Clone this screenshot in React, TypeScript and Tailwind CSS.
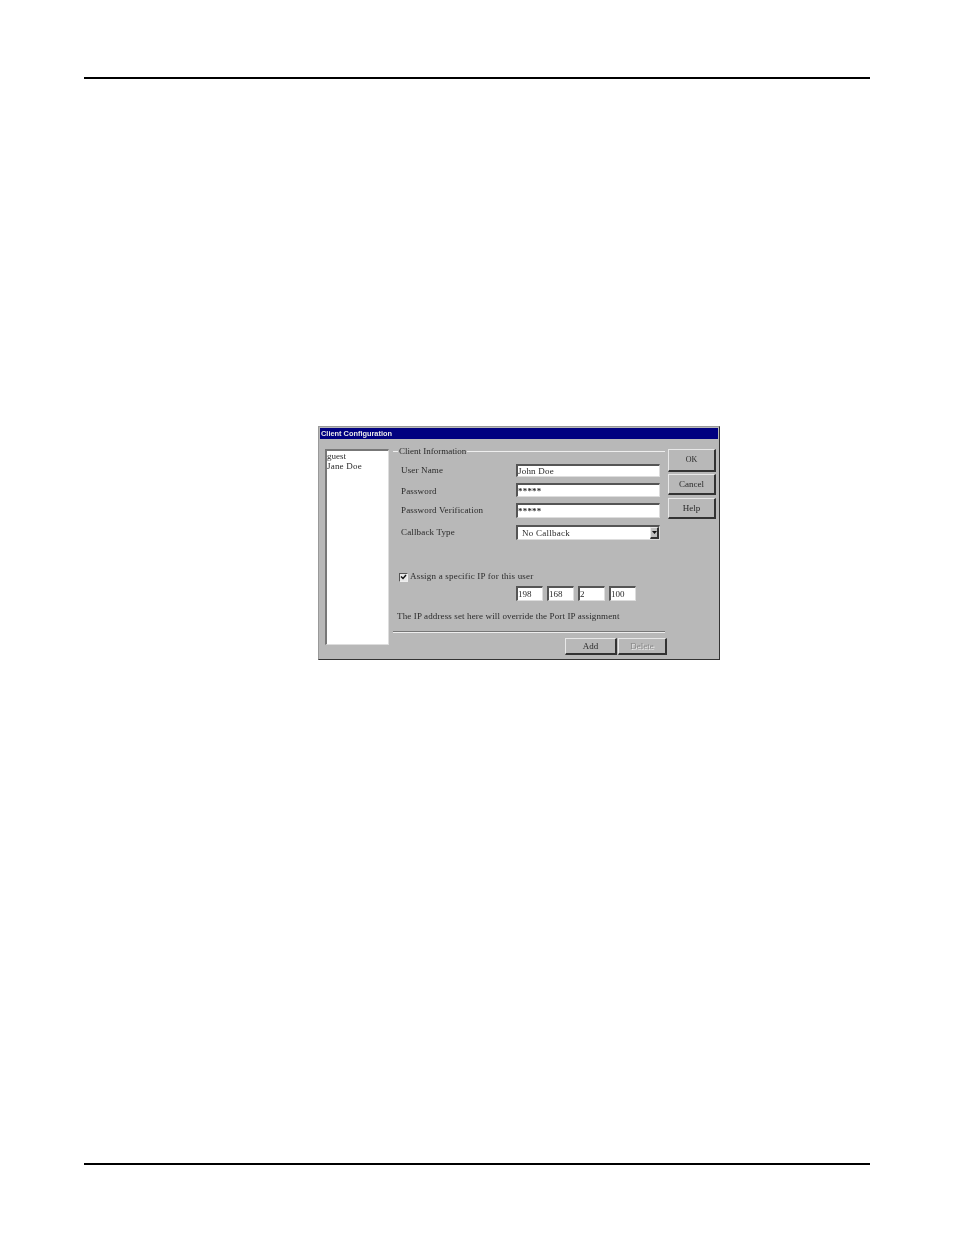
const font = "font-['Liberation_Serif',serif] text-[9px] leading-[12px] text-[#2a2a2a]"

const sunken = 'border-t-2 border-l-2 border-r border-b border-t-[#555] border-l-[#555] border-r-[#ddd] border-b-[#ddd] bg-white'
const raised = 'flex items-center justify-center border-t border-l border-r-2 border-b-2 border-t-[#e8e8e8] border-l-[#e8e8e8] border-r-[#333] border-b-[#333]'

const Field = ({ label, value, className, labelClass, valueClass }: { label: string; value: string; className: string; labelClass?: string; valueClass?: string }) => (
  <div className={`flex items-center ${className}`}>
    <span className={`ml-[8px] w-[115px] tracking-[0.15px] ${labelClass ?? ''}`}>{label}</span>
    <div className={`flex h-full w-[144px] items-center tracking-[0.2px] ${sunken} ${valueClass ?? ''}`}>{value}</div>
  </div>
)

const IpBox = ({ value }: { value: string }) => (
  <div className={`flex h-[15px] w-[27px] items-center ${sunken}`}>{value}</div>
)

const Dialog = () => (
  <div className={`flex h-[234px] w-[402px] flex-col border border-[#999] border-r-[#333] border-b-[#333] bg-[#b8b8b8] p-[1px] blur-[0.3px] ${font}`}>
    <div className="flex h-[11px] items-center bg-[#000080] pl-[1px] font-['Liberation_Sans',sans-serif] text-[7.4px] font-bold text-[#e8e8e8]">
      Client Configuration
    </div>
    <div className="flex flex-1 pt-[10px]">
      <div className="ml-[5px] flex h-[196px] w-[64px] flex-col border-t-2 border-l-2 border-b border-r border-t-[#777] border-l-[#777] border-r-[#ddd] border-b-[#ddd] bg-white">
        <span className="h-[10px] leading-[10px]">guest</span>
        <span className="h-[11px] leading-[11px] tracking-[0.2px]">Jane Doe</span>
      </div>

      <div className="ml-[4px] flex w-[272px] flex-col">
        <div className="flex h-[4px] items-center">
          <span className="h-px w-[5px] bg-[#eee]"></span>
          <span className="px-[1px]">Client Information</span>
          <span className="h-px flex-1 bg-[#eee]"></span>
        </div>
        <Field label="User Name" value="John Doe" className="mt-[11px] h-[13px]" labelClass="mb-[2px]" valueClass="pb-[1px]" />
        <Field label="Password" value="*****" className="mt-[6px] h-[14px]" labelClass="mt-[2px]" valueClass="font-bold" />
        <Field label="Password Verification" value="*****" className="mt-[6px] h-[15px]" labelClass="mb-[2px]" valueClass="font-bold" />
        <div className="mt-[7px] flex h-[15px] items-center">
          <span className="mb-[2px] ml-[8px] w-[115px] tracking-[0.15px]">Callback Type</span>
          <div className={`flex h-full w-[144px] items-center justify-between pl-[4px] tracking-[0.25px] ${sunken}`}>
            <span className="mb-[1px]">No Callback</span>
            <div className={`h-[12px] w-[9px] !border-l !border-t ${raised} bg-[#c0c0c0]`}>
              <svg width="5" height="3" viewBox="0 0 5 3"><path d="M0 0h5L2.5 3z" fill="#111" /></svg>
            </div>
          </div>
        </div>
        <div className="mt-[32px] flex h-[10px] items-center">
          <div className="ml-[6px] flex h-[9px] w-[9px] items-center justify-center border border-[#eee] border-t-[#555] border-l-[#555] bg-[#e8e8e8]">
            <svg width="7" height="6" viewBox="0 0 7 6"><path d="M1 2.5L3 4.5L6 1" fill="none" stroke="#111" strokeWidth="1.4" /></svg>
          </div>
          <span className="mb-[2px] ml-[2px] tracking-[0.2px]">Assign a specific IP for this user</span>
        </div>
        <div className="ml-[123px] mt-[4px] flex gap-[4px]">
          <IpBox value="198" />
          <IpBox value="168" />
          <IpBox value="2" />
          <IpBox value="100" />
        </div>
        <div className="ml-[4px] mt-[9px] tracking-[0.13px] whitespace-nowrap">The IP address set here will override the Port IP assignment</div>
        <div className="mt-[9px] h-[2px] border-t border-b border-t-[#777] border-b-[#eee]"></div>
        <div className="mt-[5px] flex justify-end gap-[1px]">
          <div className={`h-[17px] w-[52px] ${raised}`}>Add</div>
          <div className={`-mr-[2px] h-[17px] w-[49px] text-[#888] [text-shadow:1px_1px_0_#eee] ${raised}`}>Delete</div>
        </div>
      </div>

      <div className="ml-[3px] flex w-[48px] flex-col">
        <div className={`mb-[2px] h-[23px] text-[8px] ${raised}`}>OK</div>
        <div className={`mb-[3px] h-[21px] ${raised}`}>Cancel</div>
        <div className={`h-[21px] ${raised}`}>Help</div>
      </div>
    </div>
  </div>
)

export default function App() {
  return (
    <div className="flex h-[1235px] w-[954px] flex-col bg-white px-[84px] pt-[77px]">
      <div className="h-[2px] w-[786px] bg-black"></div>
      <div className="mt-[347px] ml-[234px]">
        <Dialog />
      </div>
      <div className="mt-[503px] h-[2px] w-[786px] bg-black"></div>
    </div>
  )
}
